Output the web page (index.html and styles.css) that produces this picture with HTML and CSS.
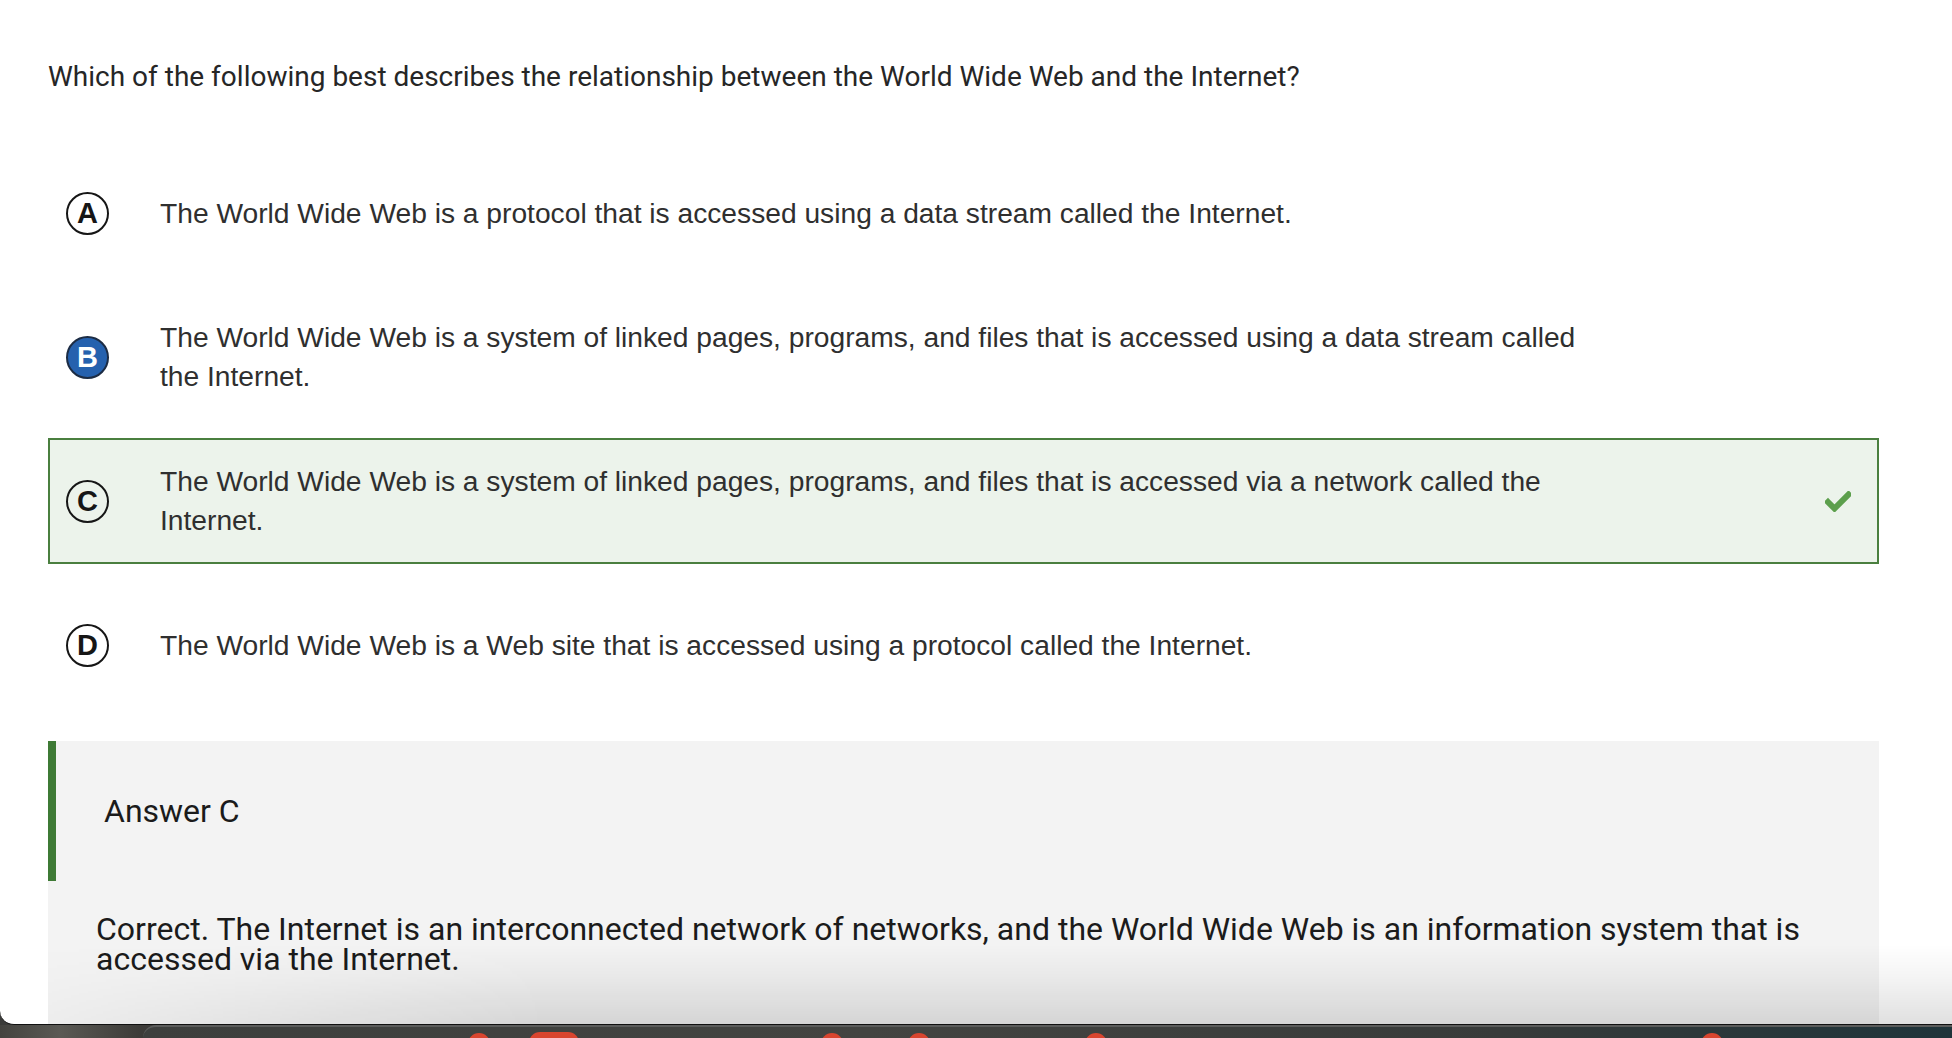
FILE: index.html
```html
<!DOCTYPE html>
<html lang="en">
<head>
<meta charset="utf-8">
<title>Quiz question</title>
<link rel="stylesheet" href="styles.css">
</head>
<body>
<div class="screen">
  <div class="window">
    <main class="quiz">
      <p class="question">Which of the following best describes the relationship between the World Wide Web and the Internet?</p>
      <ul class="options">
        <li class="option">
          <span class="badge">A</span>
          <span class="option-text">The World Wide Web is a protocol that is accessed using a data stream called the Internet.</span>
        </li>
        <li class="option">
          <span class="badge badge--filled">B</span>
          <span class="option-text">The World Wide Web is a system of linked pages, programs, and files that is accessed using a data stream called the Internet.</span>
        </li>
        <li class="option option--correct">
          <span class="badge">C</span>
          <span class="option-text">The World Wide Web is a system of linked pages, programs, and files that is accessed via a network called the Internet.</span>
          <svg class="check" viewBox="0 0 26 21" width="26" height="21" aria-hidden="true"><path d="M3 11 L9.5 17.5 L23.5 3.5" fill="none" stroke="#5c9f4c" stroke-width="6" stroke-linecap="square" stroke-linejoin="miter"/></svg>
        </li>
        <li class="option">
          <span class="badge">D</span>
          <span class="option-text">The World Wide Web is a Web site that is accessed using a protocol called the Internet.</span>
        </li>
      </ul>
      <section class="answer">
        <div class="answer-head"><h2 class="answer-title">Answer C</h2></div>
        <p class="answer-body">Correct. The Internet is an interconnected network of networks, and the World Wide Web is an information system that is accessed via the Internet.</p>
      </section>
    </main>
    <div class="dock-shadow"></div>
  </div>
  <div class="desktop">
    <div class="dock">
      <span class="dot dot-1"></span>
      <span class="dot dot-pill"></span>
      <span class="dot dot-3"></span>
      <span class="dot dot-4"></span>
      <span class="dot dot-5"></span>
      <span class="dot dot-6"></span>
    </div>
  </div>
</div>
</body>
</html>
```

FILE: styles.css
```css
* { box-sizing: border-box; }
html, body { margin: 0; padding: 0; }
body {
  width: 1952px;
  height: 1038px;
  overflow: hidden;
  background: #3b3b39;
}
.screen {
  width: 1952px;
  height: 1038px;
  display: flex;
  flex-direction: column;
}
.window {
  position: relative;
  height: 1025px;
  flex: none;
  background: #ffffff;
  border-bottom-left-radius: 14px;
  border-bottom: 1px solid #111;
  overflow: hidden;
}
.quiz {
  width: 1879px;
  padding: 61px 0 0 48px;
}
.question {
  margin: 0;
  font-family: Roboto, "Liberation Sans", sans-serif;
  font-size: 28px;
  line-height: 32px;
  color: #262626;
}
.options {
  list-style: none;
  margin: 57px 0 0 0;
  padding: 0;
  display: flex;
  flex-direction: column;
  gap: 18px;
}
.option {
  height: 126px;
  display: flex;
  align-items: center;
  padding: 0 26px 0 16px;
  border: 2px solid transparent;
  font-family: "Liberation Sans", Arial, sans-serif;
  font-size: 28.2px;
  line-height: 39px;
  color: #2f2f2f;
}
.option--correct {
  background: #ecf3eb;
  border-color: #4a7f3f;
}
.badge {
  flex: none;
  width: 43px;
  height: 43px;
  border-radius: 50%;
  border: 2px solid #161616;
  display: flex;
  align-items: center;
  justify-content: center;
  font-family: "Liberation Sans", Arial, sans-serif;
  font-weight: bold;
  font-size: 29px;
  color: #161616;
  margin-right: 51px;
}
.badge--filled {
  background: #2561ae;
  border-color: #1c2c44;
  color: #ffffff;
}
.option-text {
  flex: none;
  width: 1440px;
}
.check {
  margin-left: auto;
  flex: none;
}
.answer {
  margin-top: 33px;
  background: #f3f3f3;
  height: 300px;
}
.answer-head {
  height: 140px;
  border-left: 8px solid #3e7a35;
  display: flex;
  align-items: center;
  padding-left: 48px;
}
.answer-title {
  margin: 0;
  font-family: Roboto, "Liberation Sans", sans-serif;
  font-weight: normal;
  font-size: 32px;
  color: #1b1b1b;
}
.answer-body {
  margin: 0;
  padding: 33px 40px 0 48px;
  font-family: Roboto, "Liberation Sans", sans-serif;
  font-size: 32px;
  line-height: 30px;
  color: #1b1b1b;
}
.dock-shadow {
  position: absolute;
  left: 48px;
  right: 0;
  bottom: 0;
  height: 80px;
  background: linear-gradient(to bottom, rgba(0,0,0,0) 0%, rgba(0,0,0,0.04) 40%, rgba(0,0,0,0.12) 100%);
  -webkit-mask-image: linear-gradient(to right, rgba(0,0,0,0.2) 0px, #000 500px);
  mask-image: linear-gradient(to right, rgba(0,0,0,0.2) 0px, #000 500px);
  pointer-events: none;
}
.desktop {
  flex: 1;
  position: relative;
  background: linear-gradient(to right, #44433f 0px, #5a5954 60px, #3c3b38 140px);
}
.dock {
  position: absolute;
  left: 143px;
  right: 0;
  top: 0;
  bottom: 0;
  border-top-left-radius: 14px;
  border-top: 2px solid #5b5c5b;
  background: linear-gradient(to right, #3d3f3d 0%, #434441 40%, #383b3a 75%, #1f343a 100%);
  overflow: hidden;
}
.dot {
  position: absolute;
  top: 6px;
  width: 22px;
  height: 22px;
  border-radius: 11px;
  background: #d9452f;
}
.dot-1 { left: 325px; }
.dot-pill { left: 386px; width: 50px; top: 5px; }
.dot-3 { left: 678px; }
.dot-4 { left: 765px; }
.dot-5 { left: 942px; }
.dot-6 { left: 1558px; }
```
